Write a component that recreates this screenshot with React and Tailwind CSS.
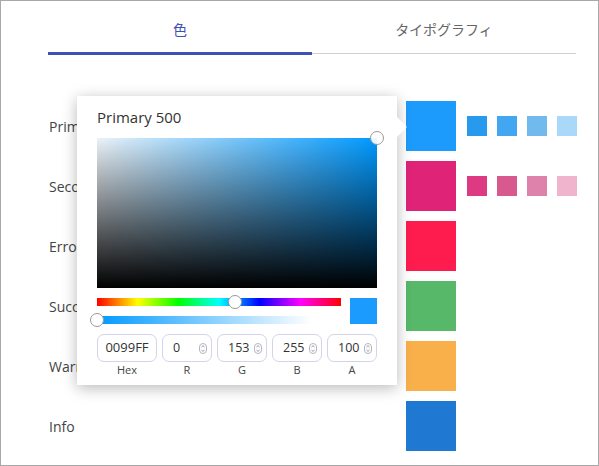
import React from 'react';

const rows = [
  { name: 'Primary', main: 'bg-[#1d9bfd]', shades: ['bg-[#279aee]', 'bg-[#43a6f0]', 'bg-[#70baee]', 'bg-[#aad8f9]'] },
  { name: 'Secondary', main: 'bg-[#df2478]', shades: ['bg-[#de3a81]', 'bg-[#d8598e]', 'bg-[#df82ab]', 'bg-[#f0b4cd]'] },
  { name: 'Error', main: 'bg-[#fe1c4e]', shades: [] },
  { name: 'Success', main: 'bg-[#56b868]', shades: [] },
  { name: 'Warning', main: 'bg-[#f9b04b]', shades: [] },
  { name: 'Info', main: 'bg-[#1f78d1]', shades: [] },
];

const fields = [
  { label: 'Hex', value: '0099FF', hex: true },
  { label: 'R', value: '0' },
  { label: 'G', value: '153' },
  { label: 'B', value: '255' },
  { label: 'A', value: '100' },
];

function Spinner() {
  return (
    <svg width="8" height="11" viewBox="0 0 8 11" className="shrink-0">
      <rect x="0.5" y="0.5" width="7" height="10" rx="3.5" fill="none" stroke="#b4b4c4" strokeWidth="1" />
      <path d="M2.5 4 L4 2.6 L5.5 4" fill="none" stroke="#8a8a9a" strokeWidth="0.9" />
      <path d="M2.5 7 L4 8.4 L5.5 7" fill="none" stroke="#8a8a9a" strokeWidth="0.9" />
    </svg>
  );
}

function Field({ label, value, hex }) {
  return (
    <div className={`flex flex-col items-center ${hex ? 'w-[60px]' : 'w-[50px]'}`}>
      <div className="w-full h-[28px] rounded-[7px] border border-[#d3d3ea] flex items-center text-[#333]">
        {hex ? (
          <span className="w-full text-center text-[13px]">{value}</span>
        ) : (
          <>
            <span className="flex-1 pl-[10px] text-[12.5px]">{value}</span>
            <span className="pr-[4px] flex items-center"><Spinner /></span>
          </>
        )}
      </div>
      <span className="text-[11px] leading-[14px] text-[#444] mt-[1px]">{label}</span>
    </div>
  );
}

function Picker() {
  return (
    <div className="absolute left-[76px] top-[95px] w-[320px] h-[289px] bg-white shadow-[0_3px_14px_rgba(0,0,0,0.28)] px-[20px] pt-[11px]">
      <div className="absolute right-[-7px] top-[24px] w-[14px] h-[14px] bg-white rotate-45" />
      <div className="relative text-[15px] leading-[20px] text-[#333]">Primary 500</div>
      <div className="relative mt-[11px] w-[280px] h-[150px] bg-[#0099ff]">
        <div className="absolute inset-0 bg-[linear-gradient(to_right,rgba(235,242,248,1),rgba(255,255,255,0))]" />
        <div className="absolute inset-0 bg-[linear-gradient(to_top,#000000,rgba(0,0,0,0))]" />
        <div className="absolute right-[-7px] top-[-7px] w-[14px] h-[14px] rounded-full border-[1.5px] border-[#999] bg-white/90" />
      </div>
      <div className="flex mt-[10px] w-[280px]">
        <div className="flex flex-col gap-[10px] w-[244px]">
          <div className="relative h-[8px] bg-[linear-gradient(to_right,#ff0000,#ffff00,#00ff00,#00ffff,#0000ff,#ff00ff,#ff0000)]">
            <div className="absolute left-[131px] top-[-3px] w-[14px] h-[14px] rounded-full border-[1.5px] border-[#999] bg-white" />
          </div>
          <div className="relative h-[8px] bg-[linear-gradient(to_right,#0099ff,rgba(0,153,255,0)_88%)]">
            <div className="absolute left-[-7px] top-[-3px] w-[14px] h-[14px] rounded-full border-[1.5px] border-[#999] bg-white" />
          </div>
        </div>
        <div className="ml-auto w-[27px] h-[26px] bg-[#1a9bfd]" />
      </div>
      <div className="flex gap-[5px] mt-[10px]">
        {fields.map(f => (
          <Field key={f.label} {...f} />
        ))}
      </div>
    </div>
  );
}

export default function App() {
  return (
    <div className="relative w-[599px] h-[466px] border border-[#a8a8a8] bg-white font-['Open_Sans','Noto_Sans_CJK_JP',sans-serif] overflow-hidden">
      <div className="pl-[47px] pr-[22px]">
        <div className="flex">
          <div className="flex-1 flex flex-col">
            <div className="h-[51px] pt-[19px] text-center text-[14px] leading-[20px] text-[#3f51b5]">色</div>
            <div className="h-[3px] bg-[#3f51b5]" />
          </div>
          <div className="flex-1 flex flex-col">
            <div className="h-[51px] pt-[19px] text-center text-[14px] leading-[20px] text-[#666]">タイポグラフィ</div>
            <div className="h-[3px] flex items-center">
              <div className="w-full h-px bg-[#d0d0d0]" />
            </div>
          </div>
        </div>
        <div className="mt-[46px] flex flex-col gap-[10px]">
          {rows.map(r => (
            <div key={r.name} className="flex items-center h-[50px]">
              <div className="w-[358px] shrink-0 pl-[1px] text-[14px] text-[#444]">{r.name}</div>
              <div className={`w-[50px] h-[50px] shrink-0 ${r.main}`} />
              <div className="flex gap-[10px] ml-[11px]">
                {r.shades.map((s, i) => (
                  <div key={i} className={`w-[20px] h-[20px] shrink-0 ${s}`} />
                ))}
              </div>
            </div>
          ))}
        </div>
      </div>
      <Picker />
    </div>
  );
}
